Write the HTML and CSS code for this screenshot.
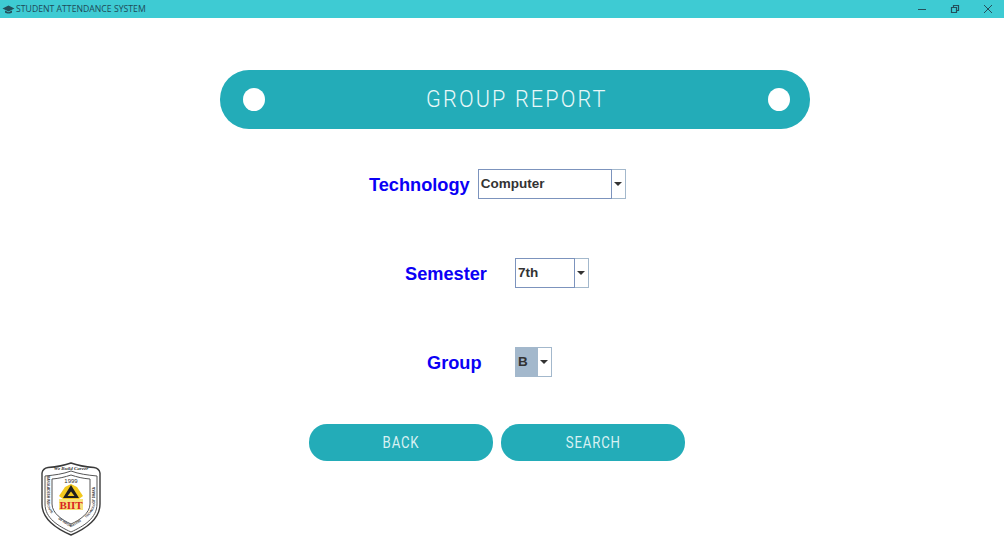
FILE: index.html
```html
<!DOCTYPE html>
<html>
<head>
    <meta charset="UTF-8">
    <title>STUDENT ATTENDANCE SYSTEM</title>
    <link rel="stylesheet" href="styles.css">
</head>
<body>
<div class="titlebar">
    <svg class="cap" width="13" height="9" viewBox="0 0 13 9">
        <path d="M0.5 3.6 6.5 0.6 12.5 3.6 6.5 6.4Z" fill="#24505c"/>
        <path d="M3 5.6V7.6C4.5 8.9 8.5 8.9 10 7.6V5.6L6.5 7.3Z" fill="#24505c"/>
    </svg>
    <span class="app-name">STUDENT ATTENDANCE SYSTEM</span>
    <div class="win-btns">
        <svg width="10" height="10" viewBox="0 0 10 10"><path d="M1 5.5H9" stroke="#24505c" fill="none"/></svg>
        <svg width="10" height="10" viewBox="0 0 10 10"><path d="M1.5 3.5H6.5V8.5H1.5ZM3.5 3.5V1.5H8.5V6.5H6.5" stroke="#24505c" stroke-width="1.2" fill="none"/></svg>
        <svg width="10" height="10" viewBox="0 0 10 10"><path d="M1 1 9 9M9 1 1 9" stroke="#24505c" fill="none"/></svg>
    </div>
</div>

<div class="banner">
    <span class="dot"></span>
    <h1>GROUP REPORT</h1>
    <span class="dot"></span>
</div>

<div class="row row-tech">
    <label>Technology</label>
    <div class="combo combo-tech"><span class="val">Computer</span><span class="arrow"></span></div>
</div>
<div class="row row-sem">
    <label>Semester</label>
    <div class="combo combo-sem"><span class="val">7th</span><span class="arrow"></span></div>
</div>
<div class="row row-group">
    <label>Group</label>
    <div class="combo combo-group"><span class="val selected">B</span><span class="arrow"></span></div>
</div>

<div class="buttons">
    <button><span>BACK</span></button>
    <button><span>SEARCH</span></button>
</div>

<svg class="logo" width="60" height="74" viewBox="0 0 60 74">
    <defs>
        <path id="ring-left" d="M6 14V42C6.500 47 10 52 15 56"/>
        <path id="ring-bottom" d="M17 57C21 60 25 63 30 65C35 63 39 60 43 57"/>
        <path id="ring-right" d="M45 56C50 52 53.500 47 54 42V14"/>
    </defs>
    <path d="M30 1C38 4 46 5 53 5.500C56 6 58.500 8 59 11V42C59 58 44 67 30 73C16 67 1 58 1 42V11C1.500 8 4 6 7 5.500C14 5 22 4 30 1Z" fill="#fff" stroke="#3a3a3a" stroke-width="1.400"/>
    <path d="M4 14V42C4 56 17 64 30 70C43 64 56 56 56 42V14" fill="none" stroke="#555" stroke-width="1"/>
    <path d="M4 14C14 13 22 12 30 9C38 12 46 13 56 14" fill="none" stroke="#555" stroke-width="1"/>
    <path d="M11 17C18 16.500 24 15 30 13C36 15 42 16.500 49 17V42C49 51 39 58 30 62C21 58 11 51 11 42Z" fill="#fff" stroke="#555" stroke-width="1"/>
    <text class="logo-top" x="30" y="8" text-anchor="middle">We Build Career</text>
    <text class="logo-ring"><textPath href="#ring-left">BANGLADESH INSTITUTE</textPath></text>
    <text class="logo-ring"><textPath href="#ring-bottom">OF INFORMATION</textPath></text>
    <text class="logo-ring"><textPath href="#ring-right">TECHNOLOGY DHAKA</textPath></text>
    <text class="logo-year" x="30" y="20.500" text-anchor="middle">1999</text>
    <path d="M18 34 24 25 30 22 36 25 42 34 38 37H22Z" fill="#f2c81e"/>
    <path d="M30 23 38 36H22ZM30 29.500 26.500 34H33.500Z" fill="#1d1d1d" fill-rule="evenodd"/>
    <rect x="18" y="37" width="24" height="11" fill="#f7e27a"/>
    <text class="logo-name" x="30" y="47" text-anchor="middle">BIIT</text>
</svg>
</body>
</html>
```

FILE: styles.css
```css
* {
    margin: 0;
    padding: 0;
    box-sizing: border-box;
}

html, body {
    width: 100%;
    height: 100%;
    overflow: hidden;
}

body {
    background: #fff;
    font-family: "Liberation Sans", Arial, sans-serif;
}

.titlebar {
    display: flex;
    align-items: center;
    height: 18px;
    padding-left: 2px;
    background: #3ecbd3;
}

.cap {
    margin-right: 1px;
}

.app-name {
    font-family: "Open Sans", sans-serif;
    font-size: 8.7px;
    color: #1f4a58;
}

.win-btns {
    display: flex;
    gap: 23px;
    margin-left: auto;
    padding-right: 11px;
}

.banner {
    display: flex;
    align-items: center;
    justify-content: space-between;
    width: 590px;
    height: 59px;
    margin: 52px 0 0 220px;
    padding: 0 20px 0 23px;
    background: #23acb8;
    border-radius: 29px;
}

.banner h1 {
    padding-bottom: 2px;
    font-family: Roboto, sans-serif;
    font-size: 24px;
    font-weight: 300;
    letter-spacing: 2.4px;
    color: #e8f8f9;
    transform: scaleX(0.9);
}

.dot {
    width: 22px;
    height: 23px;
    background: #fff;
    border-radius: 50%;
}

.row {
    display: flex;
    align-items: center;
    height: 30px;
    margin-bottom: 59px;
}

.row label {
    font-size: 18.2px;
    font-weight: bold;
    color: #0b00f5;
    position: relative;
    top: 1px;
}

.row-tech {
    margin-top: 40px;
    padding-left: 369px;
}

.row-tech label {
    margin-right: 8px;
}

.row-sem {
    padding-left: 405px;
}

.row-sem label {
    margin-right: 28px;
}

.row-group {
    padding-left: 427px;
}

.row-group label {
    margin-right: 33.4px;
}

.combo {
    display: flex;
    height: 30px;
    background: #fff;
}

.combo-tech {
    width: 148px;
}

.combo-sem {
    width: 74px;
}

.combo-group {
    width: 37px;
}

.val {
    flex: 1;
    padding: 6px 0 0 2px;
    font-size: 13.5px;
    font-weight: bold;
    color: #333;
    border: 1px solid #7c93bd;
}

.val.selected {
    background: #a3b8cc;
    border-color: #a3b8cc;
}

.arrow {
    display: flex;
    align-items: center;
    justify-content: center;
    width: 14px;
    border: 1px solid #a3b8cc;
    border-left: none;
}

.arrow::after {
    content: "";
    border: 4px solid transparent;
    border-top-color: #333;
    border-bottom-width: 0;
}

.buttons {
    display: flex;
    gap: 8px;
    margin: -12px 0 0 309px;
}

.buttons button {
    width: 184px;
    height: 37px;
    background: #23acb8;
    border: none;
    border-radius: 18px;
    font-family: Roboto, sans-serif;
    font-size: 16.5px;
    font-weight: 400;
    letter-spacing: 1px;
    color: #d8f1f3;
}

.buttons span {
    display: inline-block;
    transform: scaleX(0.8);
}

.logo {
    display: block;
    margin: 1px 0 0 41px;
}

.logo-top {
    font-family: "Liberation Serif", serif;
    font-size: 5px;
    font-style: italic;
    font-weight: bold;
    fill: #333;
}

.logo-ring {
    font-family: "Liberation Sans", sans-serif;
    font-size: 3.100px;
    font-weight: bold;
    fill: #333;
}

.logo-year {
    font-family: "Liberation Sans", sans-serif;
    font-size: 6px;
    fill: #333;
}

.logo-name {
    font-family: "Liberation Serif", serif;
    font-size: 11px;
    font-weight: bold;
    fill: #d8231f;
}
```
